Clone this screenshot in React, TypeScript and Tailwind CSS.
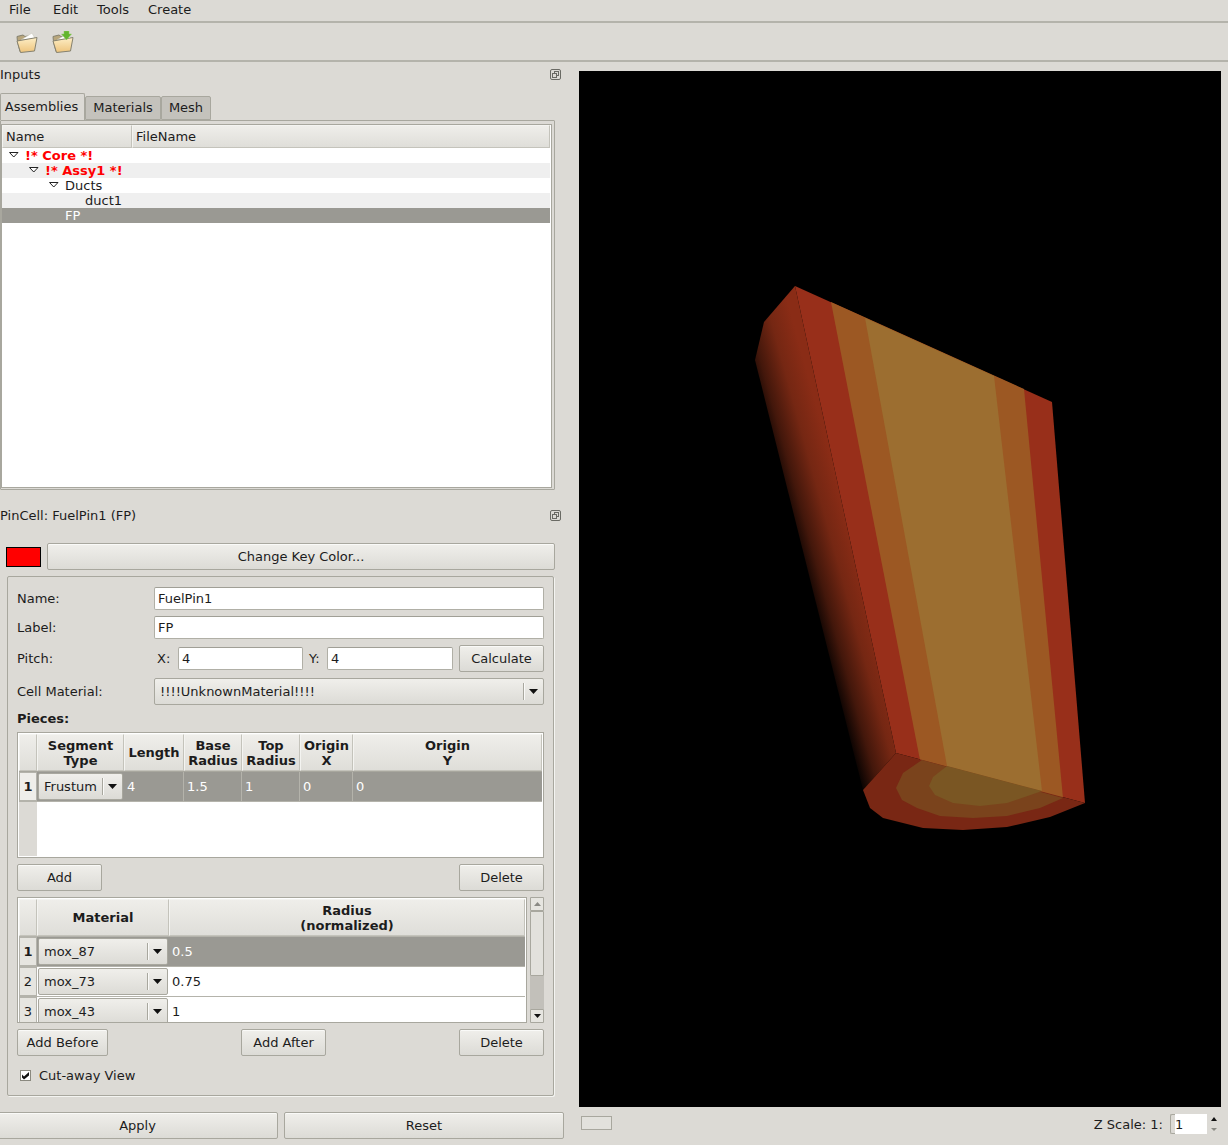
const btn =
	"flex items-center justify-center h-[27px] rounded-[2px] border border-[#a8a79e] bg-gradient-to-b from-[#f0efeb] to-[#dcdbd6] shadow-[inset_0_1px_0_#fafaf8]";
const field =
	"flex items-center h-[23px] px-[3px] bg-white rounded-[2px] border border-[#b0afa6] border-t-[#a09f96]";

const Arrow = ({ color = "#111" }: { color?: string }) => (
	<svg width="9" height="5" viewBox="0 0 9 5">
		<path d="M0 0H9L4.5 5Z" fill={color} />
	</svg>
);

const Combo = ({ text, className }: { text: string; className: string }) => (
	<div
		className={`flex items-center rounded-[2px] border border-[#a8a79e] bg-gradient-to-b from-[#f0efeb] to-[#dcdbd6] ${className}`}
	>
		<span className="flex-1 pl-[5px]">{text}</span>
		<span className="h-[70%] w-px bg-[#a8a79e] shadow-[1px_0_0_#fafaf8]" />
		<span className="flex w-[19px] justify-center pr-px">
			<Arrow />
		</span>
	</div>
);

const Head = ({ className, lines }: { className: string; lines?: string[] }) => (
	<div
		className={`flex flex-col items-center justify-center border border-[#c4c3bb] border-t-[#f4f4f1] border-l-[#f4f4f1] bg-gradient-to-b from-[#efeeea] to-[#dfded9] font-bold leading-[15px] ${className}`}
	>
		{lines?.map((l) => (
			<span key={l}>{l}</span>
		))}
	</div>
);

const TreeArrow = () => (
	<svg width="10" height="6" viewBox="0 0 10 6">
		<path d="M0.5 0.5H9L4.75 5Z" fill="#fff" stroke="#222" />
	</svg>
);

const FloatIcon = () => (
	<svg width="11" height="11" viewBox="0 0 11 11" fill="none" stroke="#6a6a64">
		<rect x="0.5" y="0.5" width="10" height="10" rx="1.5" />
		<rect x="4.5" y="2.5" width="4" height="4" />
		<rect x="2.5" y="4.5" width="4" height="4" fill="#dcdad5" />
	</svg>
);

const Folder = ({ plus, id }: { plus?: boolean; id: string }) => (
	<svg width="22" height="22" viewBox="0 0 22 22">
		<defs>
			<linearGradient id={id} x1="0" y1="0" x2="0" y2="1">
				<stop offset="0" stopColor="#fdeec6" />
				<stop offset="1" stopColor="#eec47c" />
			</linearGradient>
		</defs>
		<path d="M1.5 11L1 5.5L7 4L9 5.5L15 4.5L16 10L4 20.5Z" fill="#b8a67c" stroke="#85816f" strokeLinejoin="round" />
		<path d="M5 9L16 2L19 7.5Z" fill="#fff" stroke="#c9c7bb" strokeWidth="0.6" />
		<path d="M1 10L21 6.5L18.5 20L4.5 21.5Z" fill={`url(#${id})`} stroke="#85816f" strokeLinejoin="round" />
		{plus && <path d="M12 0H17V3H19.5L14.5 9L9.5 3H12Z" fill="#63b52f" stroke="#8fcf5f" strokeWidth="0.5" />}
	</svg>
);

const Cylinder = () => (
	<svg viewBox="0 0 642 1036" className="h-[1036px] w-[642px] bg-black">
		<defs>
			<linearGradient id="side" gradientUnits="userSpaceOnUse" x1="800" y1="572" x2="858" y2="556">
				<stop offset="0" stopColor="#000" />
				<stop offset="0.3" stopColor="#43170b" />
				<stop offset="0.65" stopColor="#752713" />
				<stop offset="1" stopColor="#8a2c16" />
			</linearGradient>
		</defs>
		<g transform="translate(-579 -71)">
			<path d="M795 286L1052 402L1085 803L896 753Z" fill="#982f1a" />
			<path d="M831 302L1024 389L1063 798L920 760Z" fill="#9c5823" />
			<path d="M865 318L994 376L1042 791L947 766Z" fill="#9c6e30" />
			<path d="M755 360L764 322L795 286L896 753L863 790Z" fill="url(#side)" />
			<path d="M896 753L863 790L870 808L883 818L923 828L963 830L1007 827L1050 817L1085 803Z" fill="#792714" />
			<path d="M922 760L903 773L896 788L902 800L917 808L940 816L973 818L1007 816L1040 808L1063 798Z" fill="#7a431c" />
			<path d="M947 766L933 777L929 786L935 795L953 803L980 806L1007 803L1042 791Z" fill="#7a5623" />
		</g>
	</svg>
);

const treeRows = [
	{ text: "!* Core *!", pad: 8, textLeft: 25, red: true, arrow: true },
	{ text: "!* Assy1 *!", pad: 28, textLeft: 45, red: true, arrow: true, alt: true },
	{ text: "Ducts", pad: 48, textLeft: 65, arrow: true },
	{ text: "duct1", textLeft: 85, alt: true },
	{ text: "FP", textLeft: 65, selected: true },
];

const materials = [
	{ n: "1", name: "mox_87", r: "0.5", selected: true },
	{ n: "2", name: "mox_73", r: "0.75" },
	{ n: "3", name: "mox_43", r: "1" },
];

export default function App() {
	return (
		<div className="flex h-[1145px] w-[1228px] flex-col overflow-hidden bg-[#dcdad5] font-['DejaVu_Sans',sans-serif] text-[13px] leading-[15px] text-[#1c1c1c]">
			{/* Menu */}
			<div className="flex h-[23px] shrink-0 items-center border-b-2 border-[#b4b3ab] pb-[3px] pl-[9px]">
				<span className="w-[44px]">File</span>
				<span className="w-[44px]">Edit</span>
				<span className="w-[51px]">Tools</span>
				<span>Create</span>
			</div>

			{/* Toolbar */}
			<div className="flex h-[39px] shrink-0 items-center gap-[14px] border-b-2 border-[#b4b3ab] pl-[16px]">
				<Folder id="open" />
				<Folder id="import" plus />
			</div>

			<div className="flex min-h-0 flex-1">
				{/* Left column */}
				<div className="flex w-[564px] shrink-0 flex-col">
					<div className="flex h-[25px] w-[561px] items-center justify-between pr-0">
						<span>Inputs</span>
						<FloatIcon />
					</div>

					{/* Tabs */}
					<div className="mt-[6px] flex h-[27px] items-end">
						<div className="flex h-[27px] w-[85px] items-center justify-center rounded-t-[2px] border border-b-0 border-[#a8a79e] bg-[#dcdad5] pb-[2px] pr-[2px]">
							Assemblies
						</div>
						<div className="flex h-[24px] w-[76px] items-center justify-center rounded-t-[2px] border border-[#a8a79e] bg-[#c4c2bc] pb-px">
							Materials
						</div>
						<div className="flex h-[24px] w-[50px] items-center justify-center rounded-t-[2px] border border-[#a8a79e] bg-[#c4c2bc] pb-px">
							Mesh
						</div>
					</div>

					{/* Tree */}
					<div className="h-[370px] w-[555px] rounded-[1px] border border-[#a8a79e] pt-[3px]">
						<div className="h-[364px] w-[551px] border border-[#a8a79e] bg-white pr-px">
							<div className="flex h-[23px]">
								<div className="flex w-[130px] items-center border border-[#c4c3bb] border-t-[#f4f4f1] border-l-[#f4f4f1] bg-gradient-to-b from-[#efeeea] to-[#dfded9] pl-[3px]">
									Name
								</div>
								<div className="flex flex-1 items-center border border-[#c4c3bb] border-t-[#f4f4f1] border-l-[#f4f4f1] bg-gradient-to-b from-[#efeeea] to-[#dfded9] pl-[3px]">
									FileName
								</div>
							</div>
							{treeRows.map((row) => (
								<div
									key={row.text}
									className={`relative h-[15px] leading-[16px] ${row.alt ? "bg-[#efefef]" : ""} ${row.selected ? "bg-[#9a9993] text-white" : ""} ${row.red ? "font-bold text-[#ff0000]" : ""}`}
								>
									{row.arrow && (
										<span className="absolute top-[4px]" style={{ left: row.pad - 1 }}>
											<TreeArrow />
										</span>
									)}
									<span className="absolute" style={{ left: row.textLeft - 2 }}>
										{row.text}
									</span>
								</div>
							))}
						</div>
					</div>

					<div className="flex h-[50px] w-[561px] items-center justify-between">
						<span>PinCell: FuelPin1 (FP)</span>
						<FloatIcon />
					</div>

					{/* Key colour */}
					<div className="mt-[3px] flex w-[555px] items-center">
						<div className="ml-[6px] h-[20px] w-[35px] border border-black bg-[#ff0000]" />
						<div className={`${btn} ml-[6px] flex-1`}>Change Key Color...</div>
					</div>

					{/* Group box */}
					<div className="ml-[7px] mt-[6px] flex h-[520px] w-[547px] flex-col rounded-[2px] border border-[#a8a79e] pl-[9px] pr-[9px] pt-[10px] shadow-[1px_1px_0_#f4f4f1]">
						<div className="flex items-center">
							<span className="w-[137px]">Name:</span>
							<div className={`${field} w-[390px]`}>FuelPin1</div>
						</div>
						<div className="mt-[6px] flex items-center">
							<span className="w-[137px]">Label:</span>
							<div className={`${field} w-[390px]`}>FP</div>
						</div>
						<div className="mt-[6px] flex items-center">
							<span className="w-[140px]">Pitch:</span>
							<span className="w-[21px]">X:</span>
							<div className={`${field} w-[125px]`}>4</div>
							<span className="ml-[6px] w-[18px]">Y:</span>
							<div className={`${field} w-[126px]`}>4</div>
							<div className={`${btn} ml-[6px] w-[85px]`}>Calculate</div>
						</div>
						<div className="mt-[6px] flex items-center">
							<span className="w-[137px]">Cell Material:</span>
							<Combo text="!!!!UnknownMaterial!!!!" className="h-[27px] w-[390px]" />
						</div>
						<div className="flex h-[27px] items-center font-bold">Pieces:</div>

						{/* Pieces table */}
						<div className="flex h-[126px] w-[527px] flex-col border border-[#a8a79e] bg-white p-px">
							<div className="flex h-[37px] shrink-0">
								<Head className="w-[18px]" />
								<Head className="w-[87px]" lines={["Segment", "Type"]} />
								<Head className="w-[60px]" lines={["Length"]} />
								<Head className="w-[58px]" lines={["Base", "Radius"]} />
								<Head className="w-[58px]" lines={["Top", "Radius"]} />
								<Head className="w-[53px]" lines={["Origin", "X"]} />
								<Head className="flex-1" lines={["Origin", "Y"]} />
							</div>
							<div className="flex h-[30px] shrink-0 border-t border-[#a8a79e] bg-[#9a9993] text-white">
								<div className="flex w-[18px] items-center justify-center border border-[#b4b3ab] bg-[#efeeea] font-bold text-[#1c1c1c]">
									1
								</div>
								<Combo text="Frustum" className="m-px w-[85px] text-[#1c1c1c]" />
								<div className="flex w-[60px] items-center border-r border-[#b4b3ab] pl-[3px]">4</div>
								<div className="flex w-[58px] items-center border-r border-[#b4b3ab] pl-[3px]">1.5</div>
								<div className="flex w-[58px] items-center border-r border-[#b4b3ab] pl-[3px]">1</div>
								<div className="flex w-[53px] items-center border-r border-[#b4b3ab] pl-[3px]">0</div>
								<div className="flex flex-1 items-center pl-[3px]">0</div>
							</div>
							<div className="min-h-0 flex-1 border-t border-[#b4b3ab]">
								<div className="h-full w-[18px] bg-[#dcdad5]" />
							</div>
						</div>

						<div className="mt-[6px] flex justify-between">
							<div className={`${btn} w-[85px]`}>Add</div>
							<div className={`${btn} w-[85px]`}>Delete</div>
						</div>

						{/* Materials table */}
						<div className="mt-[6px] flex h-[126px] items-stretch justify-between">
							<div className="flex h-[126px] w-[510px] flex-col overflow-hidden border border-[#a8a79e] bg-white p-px">
								<div className="flex h-[37px] shrink-0">
									<Head className="w-[18px]" />
									<Head className="w-[132px]" lines={["Material"]} />
									<Head className="flex-1" lines={["Radius", "(normalized)"]} />
								</div>
								<div className="h-px shrink-0 bg-[#b4b3ab]" />
								{materials.map((m) => (
									<div
										key={m.n}
										className={`flex h-[30px] shrink-0 border-b border-[#b4b3ab] ${m.selected ? "bg-[#9a9993] text-white" : ""}`}
									>
										<div
											className={`flex w-[18px] items-center justify-center border border-[#b4b3ab] bg-[#e6e5e0] text-[#1c1c1c] ${m.selected ? "font-bold" : ""}`}
										>
											{m.n}
										</div>
										<Combo text={m.name} className="m-px w-[130px] text-[#1c1c1c]" />
										<div className="flex flex-1 items-center pl-[3px]">{m.r}</div>
									</div>
								))}
							</div>

							{/* Scrollbar */}
							<div className="flex w-[14px] flex-col bg-[#c2c0ba]">
								<div className="flex h-[14px] items-center justify-center rounded-[1px] border border-[#a8a79e] bg-[#e6e5e0]">
									<svg width="7" height="4" viewBox="0 0 7 4">
										<path d="M0 4H7L3.5 0Z" fill="#8a8a84" />
									</svg>
								</div>
								<div className="h-[65px] rounded-[1px] border border-[#a8a79e] bg-[#e2e1dc]" />
								<div className="flex-1" />
								<div className="flex h-[14px] items-center justify-center rounded-[1px] border border-[#a8a79e] bg-[#e6e5e0]">
									<svg width="7" height="4" viewBox="0 0 7 4">
										<path d="M0 0H7L3.5 4Z" fill="#111" />
									</svg>
								</div>
							</div>
						</div>

						<div className="mt-[6px] flex">
							<div className={`${btn} w-[91px]`}>Add Before</div>
							<div className={`${btn} ml-[133px] w-[85px]`}>Add After</div>
							<div className={`${btn} ml-[133px] w-[85px]`}>Delete</div>
						</div>

						<div className="mt-[9px] flex h-[20px] items-center pl-[3px]">
							<span className="flex h-[11px] w-[11px] items-center justify-center border border-[#8a897f] bg-white">
								<svg width="9" height="9" viewBox="0 0 9 9">
									<path d="M1 3.5L3 5.5L8 1V4.5L3 8.5L1 6.5Z" fill="#111" />
								</svg>
							</span>
							<span className="ml-[8px]">Cut-away View</span>
						</div>
					</div>

					<div className="-ml-[3px] mt-[16px] flex gap-[6px]">
						<div className={`${btn} w-[281px]`}>Apply</div>
						<div className={`${btn} w-[280px]`}>Reset</div>
					</div>
				</div>

				{/* Right column */}
				<div className="ml-[15px] flex flex-col pt-[9px]">
					<Cylinder />
					<div className="relative flex h-[38px] w-[642px] items-center justify-end">
						<div className="absolute left-[2px] top-[9px] h-[14px] w-[31px] border border-[#a8a79e] bg-[#e2e1dc]" />
						<div className="flex items-center pb-[4px]">
							<span>Z Scale: 1:</span>
							<span className="ml-[7px] h-[20px] w-[5px] rounded-l-[2px] border-y border-l border-[#a8a79e]" />
							<div className="flex h-[20px] w-[32px] items-center bg-white">
								<span>1</span>
							</div>
							<div className="flex w-[14px] flex-col items-center gap-[7px]">
								<svg width="6" height="4" viewBox="0 0 6 4">
									<path d="M0 4H6L3 0Z" fill="#111" />
								</svg>
								<svg width="6" height="3" viewBox="0 0 6 3">
									<path d="M0 0H6L3 3Z" fill="#8a8a84" />
								</svg>
							</div>
						</div>
					</div>
				</div>
			</div>
		</div>
	);
}
